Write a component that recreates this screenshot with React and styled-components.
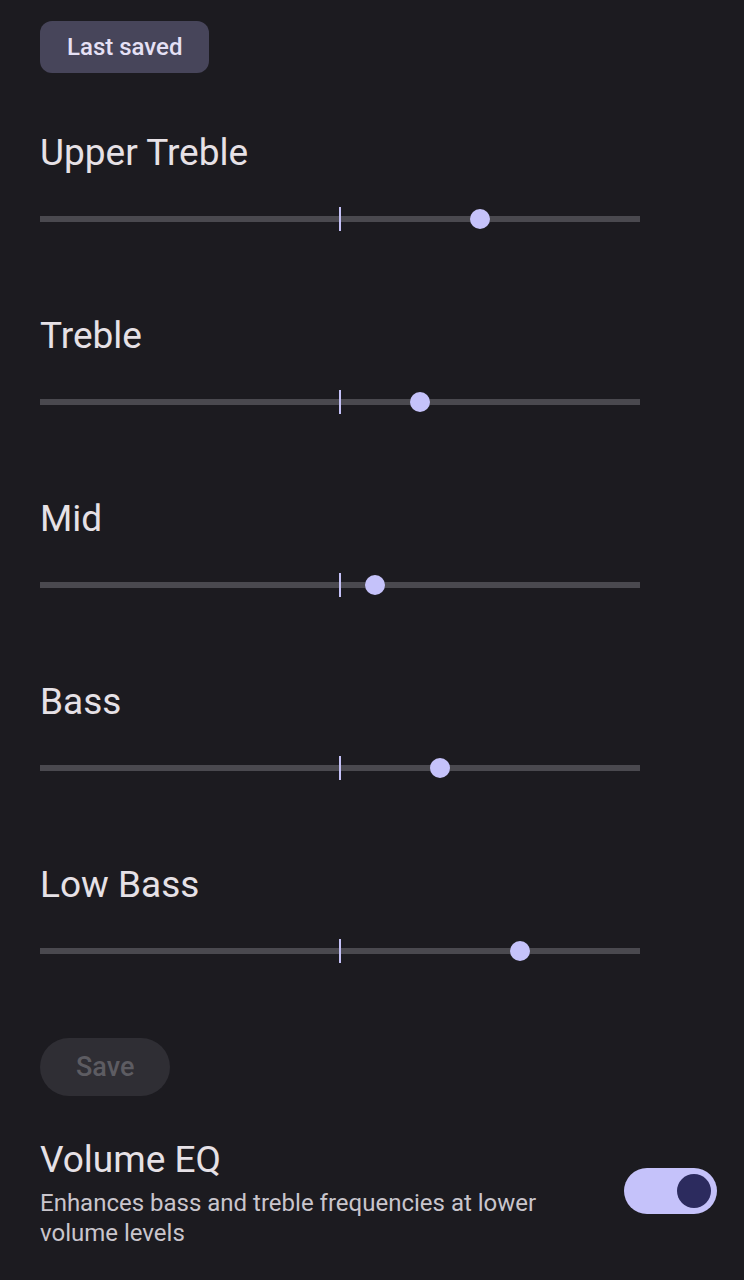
import styled, { createGlobalStyle } from "styled-components";

const GlobalStyle = createGlobalStyle`
    body {
        margin: 0;
        background: #1c1b20;
        font-family: Roboto, "Noto Sans", sans-serif;
        color: #e6e1e6;
    }
`;

const Page = styled.div`
    width: 744px;
    height: 1280px;
    box-sizing: border-box;
    padding: 21px 0 0 40px;
    background: #1c1b20;
    overflow: hidden;
`;

const TonalButton = styled.button`
    display: block;
    height: 52px;
    padding: 0 27px;
    border: none;
    border-radius: 12px;
    background: #47455a;
    color: #e5e0f5;
    font-family: inherit;
    font-size: 24px;
    font-weight: 500;
`;

const Band = styled.div`
    width: 600px;
    margin-top: ${({ $first }) => ($first ? "58px" : "92px")};
`;

const BandLabel = styled.div`
    font-size: 37px;
    line-height: 44px;
    color: #e6e1e6;
`;

const Track = styled.div`
    position: relative;
    height: 6px;
    margin-top: 41px;
    background: #4a494f;
`;

const CenterTick = styled.div`
    position: absolute;
    left: 299px;
    top: -9px;
    width: 2px;
    height: 24px;
    background: #c4c1f7;
`;

const Thumb = styled.div`
    position: absolute;
    top: -7px;
    width: 20px;
    height: 20px;
    margin-left: -10px;
    border-radius: 50%;
    background: #c5c2fa;
`;

const SaveButton = styled.button`
    display: block;
    margin-top: 84px;
    height: 58px;
    padding: 0 36px;
    border: none;
    border-radius: 29px;
    background: #2f2e34;
    color: #5d5c62;
    font-family: inherit;
    font-size: 27px;
    font-weight: 500;
`;

const SettingRow = styled.div`
    display: flex;
    align-items: flex-start;
    justify-content: space-between;
    margin-top: 42px;
    padding-right: 27px;
`;

const SettingText = styled.div`
    width: 560px;
`;

const SettingTitle = styled.div`
    font-size: 37px;
    line-height: 44px;
    color: #e6e1e6;
`;

const SettingDesc = styled.div`
    margin-top: 6px;
    font-size: 24px;
    line-height: 30px;
    color: #c9c5cc;
`;

const Switch = styled.div`
    display: flex;
    align-items: center;
    justify-content: flex-end;
    width: 93px;
    height: 46px;
    box-sizing: border-box;
    padding-right: 6px;
    margin-top: 30px;
    border-radius: 23px;
    background: #c5c2fa;
`;

const SwitchKnob = styled.div`
    width: 34px;
    height: 34px;
    border-radius: 50%;
    background: #2c2b5e;
`;

const bands = [
    { name: "Upper Treble", value: 0.733 },
    { name: "Treble", value: 0.633 },
    { name: "Mid", value: 0.558 },
    { name: "Bass", value: 0.667 },
    { name: "Low Bass", value: 0.8 }
];

export default function App()
{
    return(
        <Page>
            <GlobalStyle />
            <TonalButton>Last saved</TonalButton>
            {bands.map((band, i) => (
                <Band key={band.name} $first={i === 0}>
                    <BandLabel>{band.name}</BandLabel>
                    <Track>
                        <CenterTick />
                        <Thumb style={{ left: `${band.value * 100}%` }} />
                    </Track>
                </Band>
            ))}
            <SaveButton>Save</SaveButton>
            <SettingRow>
                <SettingText>
                    <SettingTitle>Volume EQ</SettingTitle>
                    <SettingDesc>
                        Enhances bass and treble frequencies at lower volume levels
                    </SettingDesc>
                </SettingText>
                <Switch>
                    <SwitchKnob />
                </Switch>
            </SettingRow>
        </Page>
    );
}
